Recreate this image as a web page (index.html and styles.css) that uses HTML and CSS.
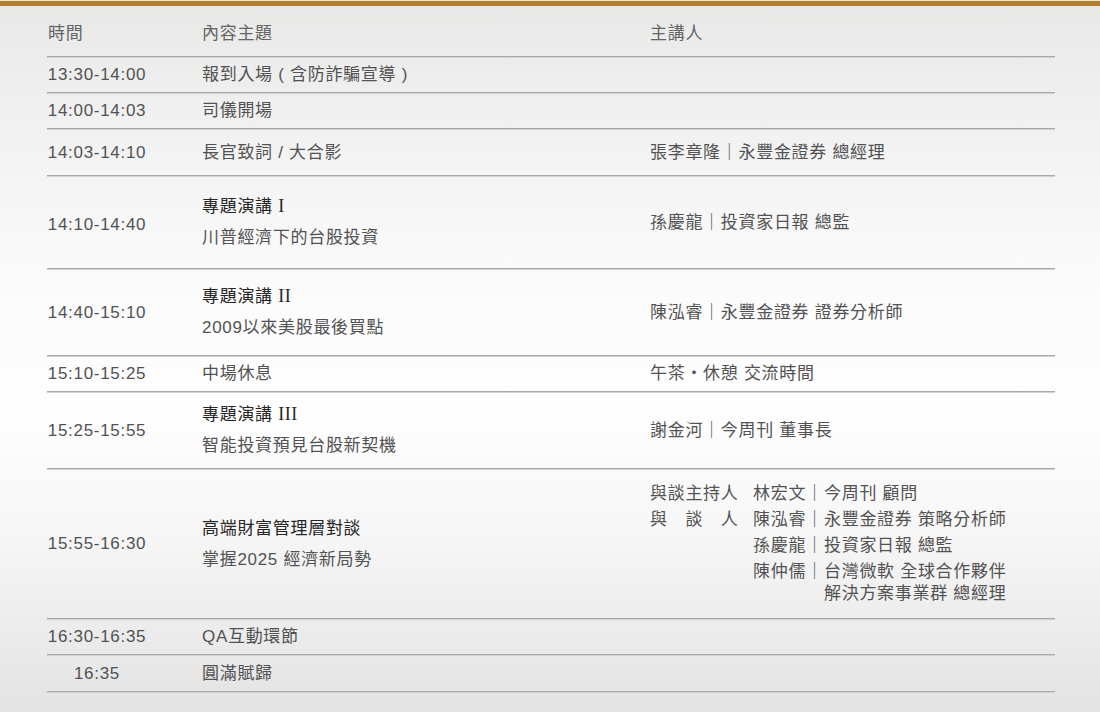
FILE: index.html
```html
<!DOCTYPE html>
<html lang="zh-Hant">
<head>
<meta charset="utf-8">
<title>議程</title>
<link rel="stylesheet" href="styles.css">
</head>
<body>
<div class="topbar"></div>
<div class="schedule">
  <div class="row head">
    <div class="c-time">時間</div>
    <div class="c-topic">內容主題</div>
    <div class="c-spk">主講人</div>
  </div>
  <div class="row h35">
    <div class="c-time">13:30-14:00</div>
    <div class="c-topic">報到入場 ( 含防詐騙宣導 )</div>
    <div class="c-spk"></div>
  </div>
  <div class="row h35">
    <div class="c-time">14:00-14:03</div>
    <div class="c-topic">司儀開場</div>
    <div class="c-spk"></div>
  </div>
  <div class="row h46">
    <div class="c-time">14:03-14:10</div>
    <div class="c-topic">長官致詞 / 大合影</div>
    <div class="c-spk">張李章隆｜永豐金證券 總經理</div>
  </div>
  <div class="row h92">
    <div class="c-time lower">14:10-14:40</div>
    <div class="c-topic">
      <div class="title">專題演講 <span class="roman">I</span></div>
      <div class="sub">川普經濟下的台股投資</div>
    </div>
    <div class="c-spk">孫慶龍｜投資家日報 總監</div>
  </div>
  <div class="row h86">
    <div class="c-time">14:40-15:10</div>
    <div class="c-topic">
      <div class="title">專題演講 <span class="roman">II</span></div>
      <div class="sub">2009以來美股最後買點</div>
    </div>
    <div class="c-spk">陳泓睿｜永豐金證券 證券分析師</div>
  </div>
  <div class="row h35">
    <div class="c-time">15:10-15:25</div>
    <div class="c-topic">中場休息</div>
    <div class="c-spk">午茶・休憩 交流時間</div>
  </div>
  <div class="row h76">
    <div class="c-time">15:25-15:55</div>
    <div class="c-topic">
      <div class="title">專題演講 <span class="roman">III</span></div>
      <div class="sub">智能投資預見台股新契機</div>
    </div>
    <div class="c-spk">謝金河｜今周刊 董事長</div>
  </div>
  <div class="row h149">
    <div class="c-time">15:55-16:30</div>
    <div class="c-topic">
      <div class="title">高端財富管理層對談</div>
      <div class="sub">掌握2025 經濟新局勢</div>
    </div>
    <div class="c-spk">
      <div class="panel">
        <div class="role">與談主持人</div>
        <div class="ents">
          <div class="ent"><span class="nm">林宏文｜</span><span class="org">今周刊 顧問</span></div>
        </div>
        <div class="role">與　談　人</div>
        <div class="ents">
          <div class="ent"><span class="nm">陳泓睿｜</span><span class="org">永豐金證券 策略分析師</span></div>
          <div class="ent"><span class="nm">孫慶龍｜</span><span class="org">投資家日報 總監</span></div>
          <div class="ent"><span class="nm">陳仲儒｜</span><span class="org">台灣微軟 全球合作夥伴<br>解決方案事業群 總經理</span></div>
        </div>
      </div>
    </div>
  </div>
  <div class="row h35">
    <div class="c-time">16:30-16:35</div>
    <div class="c-topic">QA互動環節</div>
    <div class="c-spk"></div>
  </div>
  <div class="row h36">
    <div class="c-time">16:35</div>
    <div class="c-topic">圓滿賦歸</div>
    <div class="c-spk"></div>
  </div>
</div>
</body>
</html>
```
FILE: styles.css
```css
html, body {
  margin: 0;
  padding: 0;
}
body {
  width: 1100px;
  height: 712px;
  overflow: hidden;
  background: linear-gradient(to bottom, #e8e8e7 0%, #f1f1f1 18%, #fbfbfb 40%, #fefefe 58%, #f6f6f6 75%, #e3e3e3 100%);
  font-family: "Liberation Sans", "Noto Sans CJK TC", sans-serif;
  font-size: 17px;
  letter-spacing: 0.7px;
  color: #525252;
}
.topbar {
  margin-top: 1px;
  height: 5px;
  background: #b27e2b;
}
.schedule {
  margin: 0 45px 0 47px;
  display: flex;
  flex-direction: column;
}
.row {
  display: grid;
  grid-template-columns: 155px 448px 1fr;
  align-items: center;
  border-bottom: 1px solid #a9a9a9;
  box-shadow: 0 1px 0 #d2d2d2;
  line-height: 23px;
  box-sizing: border-box;
}
.row.head {
  height: 51px;
  padding-top: 4px;
  color: #646464;
}
.h35 { height: 36px; }
.h36 { height: 37px; }
.h46 { height: 47px; }
.h92 { height: 93px; }
.h86 { height: 87px; }
.h76 { height: 77px; }
.h149 { height: 150px; }
.c-time {
  width: 100px;
  text-align: center;
}
.c-time.lower {
  padding-top: 4px;
}
.head .c-time {
  text-align: left;
  padding-left: 1px;
}
.title {
  color: #262626;
  line-height: 31px;
}
.sub {
  line-height: 31px;
}
.roman {
  font-family: "Liberation Serif", serif;
  font-size: 18px;
  letter-spacing: 0.5px;
}
.panel {
  display: grid;
  grid-template-columns: 103px 1fr;
  line-height: 22px;
}
.ents {
  display: flex;
  flex-direction: column;
}
.ent {
  display: flex;
  margin-bottom: 4px;
}
.ents:last-child .ent:last-child {
  margin-bottom: 0;
}
.nm {
  width: 71px;
  flex: none;
}
```
